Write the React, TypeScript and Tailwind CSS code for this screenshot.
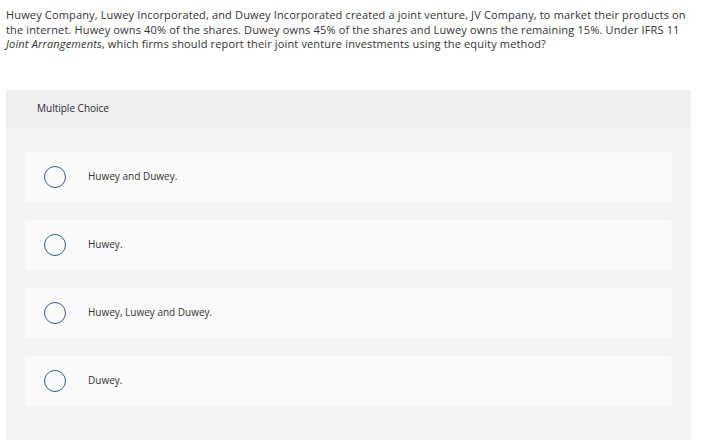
import React from "react";

const options = ["Huwey and Duwey.", "Huwey.", "Huwey, Luwey and Duwey.", "Duwey."];

export default function App() {
  return (
    <div className="w-[714px] h-[440px] overflow-hidden bg-white" style={{ fontFamily: "'Open Sans', sans-serif" }}>
      <p className="px-[6px] pt-[8px] text-[11px] leading-[14.5px] tracking-[0.15px] text-[#333] whitespace-nowrap">
        Huwey Company, Luwey Incorporated, and Duwey Incorporated created a joint venture, JV Company, to market their products on<br />
        the internet. Huwey owns 40% of the shares. Duwey owns 45% of the shares and Luwey owns the remaining 15%. Under IFRS 11<br />
        <i>Joint Arrangements</i>, which firms should report their joint venture investments using the equity method?
      </p>
      <div className="ml-[6px] mt-[38px] w-[685px] h-[400px] bg-[#f4f4f4] rounded-t-[3px]">
        <div className="h-[38px] bg-[#efefef] rounded-t-[3px] flex items-center pl-[31px] text-[10px] text-[#2a2a3a]">
          Multiple Choice
        </div>
        <div className="flex flex-col gap-[18px] pt-[24px] px-[19px]">
          {options.map((o) => (
            <div key={o} className="h-[50px] bg-[#fafafa] rounded-[2px] flex items-center">
              <span className="ml-[19px] w-[22px] h-[22px] rounded-full border-[1.5px] border-[#2f5f8f]" />
              <span className="ml-[22px] text-[10px] text-[#333]">{o}</span>
            </div>
          ))}
        </div>
      </div>
    </div>
  );
}
